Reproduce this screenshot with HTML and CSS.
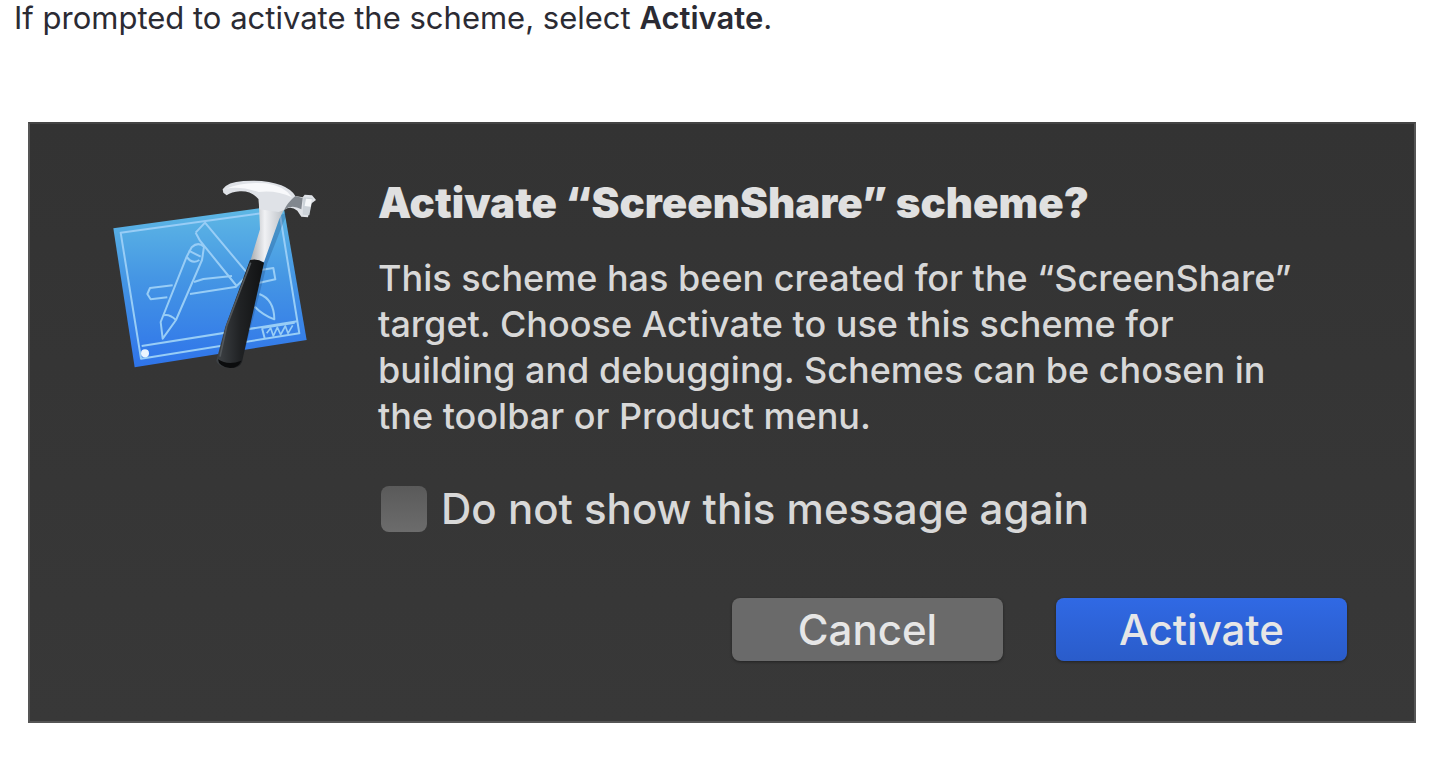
FILE: index.html
```html
<!DOCTYPE html>
<html lang="en">
<head>
    <meta charset="UTF-8">
    <meta name="viewport" content="width=device-width, initial-scale=1.0">
    <title>Activate scheme</title>
    <link rel="stylesheet" href="styles.css">
</head>
<body>

    <p class="step">If prompted to activate the scheme, select <strong>Activate</strong>.</p>

    <form class="dialog" role="dialog" aria-labelledby="dialogTitle">
        <svg class="icon" viewBox="60 60 630 570" aria-hidden="true">
            <defs>
                <linearGradient id="sheet" x1="0" y1="0" x2="0" y2="1">
                    <stop offset="0" stop-color="#5fb9e4"/>
                    <stop offset="0.45" stop-color="#4596e4"/>
                    <stop offset="1" stop-color="#2f74ea"/>
                </linearGradient>
                <linearGradient id="steel" x1="0" y1="0" x2="1" y2="0">
                    <stop offset="0" stop-color="#a9adb1"/>
                    <stop offset="0.4" stop-color="#f0f1f4"/>
                    <stop offset="1" stop-color="#b5bbc1"/>
                </linearGradient>
                <linearGradient id="grip" x1="0" y1="0" x2="1" y2="0">
                    <stop offset="0" stop-color="#3f4347"/>
                    <stop offset="0.5" stop-color="#202224"/>
                    <stop offset="1" stop-color="#101112"/>
                </linearGradient>
            </defs>

            <!-- blueprint -->
            <path d="M70 205 L580 135 L650 540 L134 622 Z" fill="url(#sheet)"/>
            <g fill="none" stroke="#98cdf6" stroke-width="6" stroke-linejoin="round">
                <path d="M92 218 L568 152 L628 520 L153 596 Z"/>
                <path d="M155 558 L622 484"/>
                <path d="M516 504 L524 535 M516 504 L614 488"/>
                <path d="M530 520 l12 -16 8 24 12 -26 10 22 14 -26 8 22 14 -24" stroke-width="5"/>
                <path d="M317 218 L345 188 L468 335 M317 218 L330 242 L440 378 L468 350"/>
                <path d="M305 262 Q324 244 342 260 L336 300 L258 480 L218 536 L212 486 L290 290 Z"/>
                <path d="M290 290 Q306 314 328 300 M222 466 Q238 462 258 480 M296 272 L332 290"/>
                <path d="M248 376 L180 384 L172 402 L182 418 L232 412"/>
                <path d="M312 366 L340 357 L426 348 M300 402 L440 380"/>
                <path d="M512 330 L550 324 L556 358 L502 370"/>
                <path d="M508 402 Q552 418 553 478 Q520 466 494 440"/>
            </g>
            <circle cx="165" cy="580" r="12" fill="#eaf5ff"/>

            <!-- hammer -->
            <path d="M570 165 L592 158 L532 310 L462 580 L440 584 L490 330 Z" fill="#123a70" opacity="0.25"/>
            <path d="M506 118 L588 138 L568 176 L522 306 L482 300 L510 208 Z" fill="url(#steel)"/>
            <path d="M398 88 Q412 66 460 63 Q530 58 574 76 Q604 88 616 108 L638 112 L644 104 L666 106 L678 120 L662 132 L654 172 L634 170 L622 152 Q602 136 582 150 L566 156 L508 148 L506 118 Q484 92 450 94 Q424 96 410 106 L400 98 Z" fill="#dfe2e7"/>
            <path d="M408 86 Q460 64 528 70 Q584 78 606 112 Q560 90 506 96 Q450 78 408 86 Z" fill="#f8f9fb"/>
            <path d="M616 108 L638 114 L634 148 Q606 132 582 150 Q594 126 616 108 Z" fill="#81878e"/>
            <path d="M640 112 L668 114 L658 166 L638 164 Z" fill="#ccd2d8"/>
            <path d="M648 116 L666 118 L662 140 L644 138 Z" fill="#f5f7f9"/>
            <path d="M480 300 Q502 294 522 308 L456 606 Q448 626 420 624 Q382 620 379 602 L406 500 Z" fill="url(#grip)"/>
            <path d="M482 308 L410 498 L390 590" fill="none" stroke="#52575b" stroke-width="5"/>
            <path d="M384 598 Q414 618 454 602 Q446 624 420 624 Q386 620 384 598 Z" fill="#0b0c0d"/>
        </svg>

        <div class="content">
            <h1 class="title" id="dialogTitle">Activate “ScreenShare” scheme?</h1>
            <p class="message">This scheme has been created for the “ScreenShare” target. Choose Activate to use this scheme for building and debugging. Schemes can be chosen in the toolbar or Product menu.</p>
            <div class="option">
                <input type="checkbox" id="hideMessage">
                <label for="hideMessage">Do not show this message again</label>
            </div>
            <div class="buttons">
                <button type="button" class="cancel-btn">Cancel</button>
                <button type="button" class="activate-btn">Activate</button>
            </div>
        </div>
    </form>

</body>
</html>
```
FILE: styles.css
```css
* {
    box-sizing: border-box;
    margin: 0;
    padding: 0;
    font-family: 'Inter', sans-serif;
}

body {
    background: white;
}

.step {
    padding: 0 14px;
    font-size: 31px;
    line-height: 36px;
    color: #2b2b33;
}

.step strong {
    font-weight: 600;
}

/* Dialog */
.dialog {
    display: flex;
    align-items: flex-start;
    gap: 58px;
    margin: 86px 24px 38px 28px;
    padding: 56px 67px 60px 80px;
    background: linear-gradient(#333333, #383838);
    border: 2px solid #555555;
    border-top-color: #444444;
}

.icon {
    flex: none;
    width: 210px;
    height: 190px;
}

.content {
    flex: 1;
    color: #d8d8d8;
}

.title {
    font-size: 42px;
    line-height: 46px;
    font-weight: 900;
    color: #e0e0e0;
}

.message {
    max-width: 930px;
    margin-top: 29px;
    font-size: 36px;
    line-height: 46px;
    font-weight: 500;
}

/* Checkbox */
.option {
    display: flex;
    align-items: center;
    gap: 14px;
    margin: 46px 0 0 3px;
    font-size: 42px;
    line-height: 48px;
    font-weight: 500;
}

.option input {
    appearance: none;
    width: 46px;
    height: 46px;
    border-radius: 8px;
    background: linear-gradient(#5a5a5a, #6c6c6c);
}

/* Buttons */
.buttons {
    display: flex;
    justify-content: flex-end;
    gap: 53px;
    margin-top: 65px;
}

.buttons button {
    height: 63px;
    border: none;
    border-radius: 8px;
    font-size: 42px;
    font-weight: 500;
    color: #e6e6e6;
    box-shadow: 0 1px 3px rgba(0, 0, 0, 0.4);
}

.buttons .cancel-btn {
    width: 271px;
    background: #6a6a6a;
}

.buttons .activate-btn {
    width: 291px;
    background: linear-gradient(#3069e4, #2a5cca);
}
```
